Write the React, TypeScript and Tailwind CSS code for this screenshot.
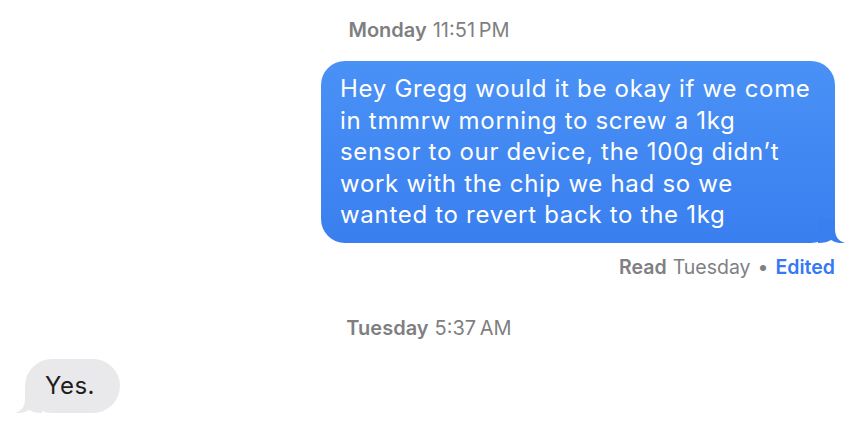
import React from "react";

export default function App() {
  return (
    <div className="w-[858px] h-[428px] bg-white overflow-hidden relative font-['Inter',sans-serif]">
      <div className="flex flex-col">
        <div className="h-[61px] flex items-start justify-center pt-[18px] text-[20px] text-[#7f7f82] leading-[24px]">
          <span className="font-semibold">Monday</span>
          <span className="ml-[6px]">11:51&#8201;PM</span>
        </div>
        <div className="flex justify-end pr-[23px]">
          <div className="relative w-[514px]">
            <div className="rounded-[24px] bg-gradient-to-b from-[#4a91f6] to-[#3a7fef] pl-[19px] pr-[4px] py-[12px] text-white text-[24px] leading-[31.5px] tracking-[0.7px] whitespace-nowrap">
              Hey Gregg would it be okay if we come
              <br />
              in tmmrw morning to screw a 1kg
              <br />
              sensor to our device, the 100g didn’t
              <br />
              work with the chip we had so we
              <br />
              wanted to revert back to the 1kg
            </div>
            <svg
              className="absolute right-[-10px] bottom-0"
              width="27"
              height="24"
              viewBox="0 0 27 24"
            >
              <path
                d="M0 0 H17 V10 C17 17 20 22 27 24 C22 24.6 17 23.6 13 21 C10 23 6 24 0 24 Z"
                fill="#3a7fef"
              />
            </svg>
          </div>
        </div>
        <div className="flex justify-end pr-[23px] pt-[12px] text-[19.5px] leading-[24px] text-[#808084]">
          <span className="font-semibold">Read</span>
          <span className="ml-[6px]">Tuesday</span>
          <span className="mx-[7px]">•</span>
          <span className="font-semibold text-[#3478f6]">Edited</span>
        </div>
        <div className="flex justify-center pt-[37px] text-[20px] text-[#7f7f82] leading-[24px]">
          <span className="font-semibold">Tuesday</span>
          <span className="ml-[6px]">5:37&#8201;AM</span>
        </div>
        <div className="flex pl-[25px] pt-[19px]">
          <div className="relative">
            <div className="rounded-[27px] bg-[#e9e9eb] pl-[20px] pr-[25px] h-[54px] flex items-center text-[24px] tracking-[0.5px] text-[#1d1d1f]">
              Yes.
            </div>
            <svg
              className="absolute left-[-10px] bottom-0"
              width="27"
              height="24"
              viewBox="0 0 27 24"
            >
              <path
                d="M27 0 H10 V10 C10 17 7 22 0 24 C5 24.6 10 23.6 14 21 C17 23 21 24 27 24 Z"
                fill="#e9e9eb"
              />
            </svg>
          </div>
        </div>
      </div>
    </div>
  );
}
